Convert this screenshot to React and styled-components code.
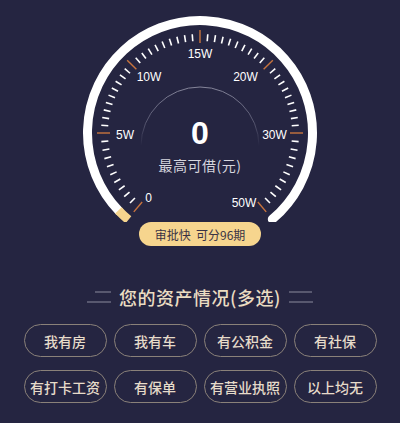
import React, { useState } from 'react';
import styled, { createGlobalStyle } from 'styled-components';

const GlobalStyle = createGlobalStyle`
  html, body {
    margin: 0;
    padding: 0;
    background: #252541;
  }
  body {
    font-family: "Noto Sans CJK SC", "Noto Sans", sans-serif;
  }
`;

const Page = styled.div`
  width: 400px;
  height: 423px;
  overflow: hidden;
  background: #252541;
  display: flex;
  flex-direction: column;
  align-items: center;
`;

const GaugeWrap = styled.div`
  position: relative;
  width: 400px;
  height: 222px;
  svg {
    display: block;
  }
`;

const Readout = styled.div`
  position: absolute;
  left: 0;
  right: 0;
  top: 114px;
  display: flex;
  flex-direction: column;
  align-items: center;
`;

const Value = styled.div`
  font-family: "Liberation Sans", Roboto, sans-serif;
  font-weight: 700;
  font-size: 32px;
  line-height: 38px;
  color: #ffffff;
`;

const ValueLabel = styled.div`
  margin-top: 3px;
  font-size: 14px;
  line-height: 20px;
  color: #d6d6de;
  letter-spacing: 0.5px;
`;

const Badge = styled.div`
  width: 122px;
  height: 24px;
  border-radius: 12px;
  background: #f6d58e;
  color: #3a3344;
  font-size: 12px;
  display: flex;
  align-items: center;
  justify-content: center;
  white-space: pre;
`;

const TitleRow = styled.div`
  margin-top: 39px;
  display: flex;
  align-items: center;
  gap: 8px;
`;

const Deco = styled.div`
  width: 24px;
  height: 12px;
  display: flex;
  flex-direction: column;
  justify-content: space-between;
  align-items: ${p => (p.$left ? 'flex-end' : 'flex-start')};
  span {
    display: block;
    height: 2px;
    background: #58586f;
  }
  span:first-child {
    width: ${p => (p.$left ? '16px' : '23px')};
  }
  span:last-child {
    width: 24px;
  }
`;

const Title = styled.h2`
  margin: 0;
  font-size: 18px;
  line-height: 24px;
  font-weight: 500;
  color: #eadcc2;
  letter-spacing: 0.5px;
`;

const Options = styled.div`
  margin-top: 15px;
  display: grid;
  grid-template-columns: repeat(4, 83px);
  column-gap: 7px;
  row-gap: 13px;
`;

const Option = styled.button`
  height: 33px;
  padding: 0;
  border-radius: 17px;
  border: 1px solid ${p => (p.$active ? '#f6d58e' : '#8a8179')};
  background: transparent;
  color: ${p => (p.$active ? '#f6d58e' : '#e6dbca')};
  font-family: "Noto Sans CJK SC", sans-serif;
  font-size: 14px;
  font-weight: 500;
  cursor: pointer;
  white-space: nowrap;
`;

const CX = 200;
const CY = 133;

function polar(cx, cy, r, deg) {
  const a = (deg * Math.PI) / 180;
  return [cx + r * Math.cos(a), cy + r * Math.sin(a)];
}

function arcPath(cx, cy, r, a1, a2) {
  const [x1, y1] = polar(cx, cy, r, a1);
  const [x2, y2] = polar(cx, cy, r, a2);
  const large = a2 - a1 > 180 ? 1 : 0;
  return `M ${x1} ${y1} A ${r} ${r} 0 ${large} 1 ${x2} ${y2}`;
}

const majors = [130, 180, 225, 270, 315, 360, 410];

const labels = [
  { text: '0', x: 148.5, y: 198 },
  { text: '5W', x: 125, y: 135 },
  { text: '10W', x: 149, y: 77 },
  { text: '15W', x: 200, y: 54 },
  { text: '20W', x: 245.5, y: 77 },
  { text: '30W', x: 274.5, y: 135 },
  { text: '50W', x: 244, y: 203 },
];

function Ticks() {
  const out = [];
  for (let s = 0; s < majors.length - 1; s++) {
    const a = majors[s];
    const b = majors[s + 1];
    for (let i = 0; i < 10; i++) {
      const deg = a + ((b - a) * i) / 10;
      const major = i === 0;
      const [x1, y1] = polar(CX, CY, major ? 90 : 92, deg);
      const [x2, y2] = polar(CX, CY, major ? 103 : 99, deg);
      out.push(
        <line
          key={deg}
          x1={x1}
          y1={y1}
          x2={x2}
          y2={y2}
          stroke={major ? '#c8743e' : '#ffffff'}
          strokeWidth={major ? 1.4 : 1.6}
        />
      );
    }
  }
  const [x1, y1] = polar(CX, CY, 90, 410);
  const [x2, y2] = polar(CX, CY, 103, 410);
  out.push(<line key="end" x1={x1} y1={y1} x2={x2} y2={y2} stroke="#c8743e" strokeWidth={1.4} />);
  return out;
}

function Gauge() {
  return (
    <svg width="400" height="222" viewBox="0 0 400 222">
      <defs>
        <linearGradient id="innerFade" x1="0" y1="0" x2="0" y2="1">
          <stop offset="0" stopColor="#85859a" stopOpacity="1" />
          <stop offset="0.6" stopColor="#6c6c84" stopOpacity="0.7" />
          <stop offset="1" stopColor="#6c6c84" stopOpacity="0" />
        </linearGradient>
      </defs>
      <path d={arcPath(CX, CY, 112.5, 136, 410)} fill="none" stroke="#ffffff" strokeWidth="9" strokeLinecap="round" />
      <path d={arcPath(CX, CY, 112.5, 129.5, 136.5)} fill="none" stroke="#f6d58e" strokeWidth="9" />
      <Ticks />
      {labels.map(l => (
        <text
          key={l.text}
          x={l.x}
          y={l.y}
          fill="#ffffff"
          fontSize="12"
          fontFamily="'Liberation Sans', Roboto, sans-serif"
          textAnchor="middle"
          dominantBaseline="central"
        >
          {l.text}
        </text>
      ))}
      <path d={arcPath(CX, 146, 59, 180, 360)} fill="none" stroke="url(#innerFade)" strokeWidth="1" />
    </svg>
  );
}

const assets = ['我有房', '我有车', '有公积金', '有社保', '有打卡工资', '有保单', '有营业执照', '以上均无'];

export default function App() {
  const [picked, setPicked] = useState([]);
  const toggle = name =>
    setPicked(p => (p.includes(name) ? p.filter(n => n !== name) : [...p, name]));

  return (
    <Page>
      <GlobalStyle />
      <GaugeWrap>
        <Gauge />
        <Readout>
          <Value>0</Value>
          <ValueLabel>最高可借(元)</ValueLabel>
        </Readout>
      </GaugeWrap>
      <Badge>审批快  可分96期</Badge>
      <TitleRow>
        <Deco $left>
          <span />
          <span />
        </Deco>
        <Title>您的资产情况(多选)</Title>
        <Deco>
          <span />
          <span />
        </Deco>
      </TitleRow>
      <Options>
        {assets.map(a => (
          <Option key={a} $active={picked.includes(a)} onClick={() => toggle(a)}>
            {a}
          </Option>
        ))}
      </Options>
    </Page>
  );
}
